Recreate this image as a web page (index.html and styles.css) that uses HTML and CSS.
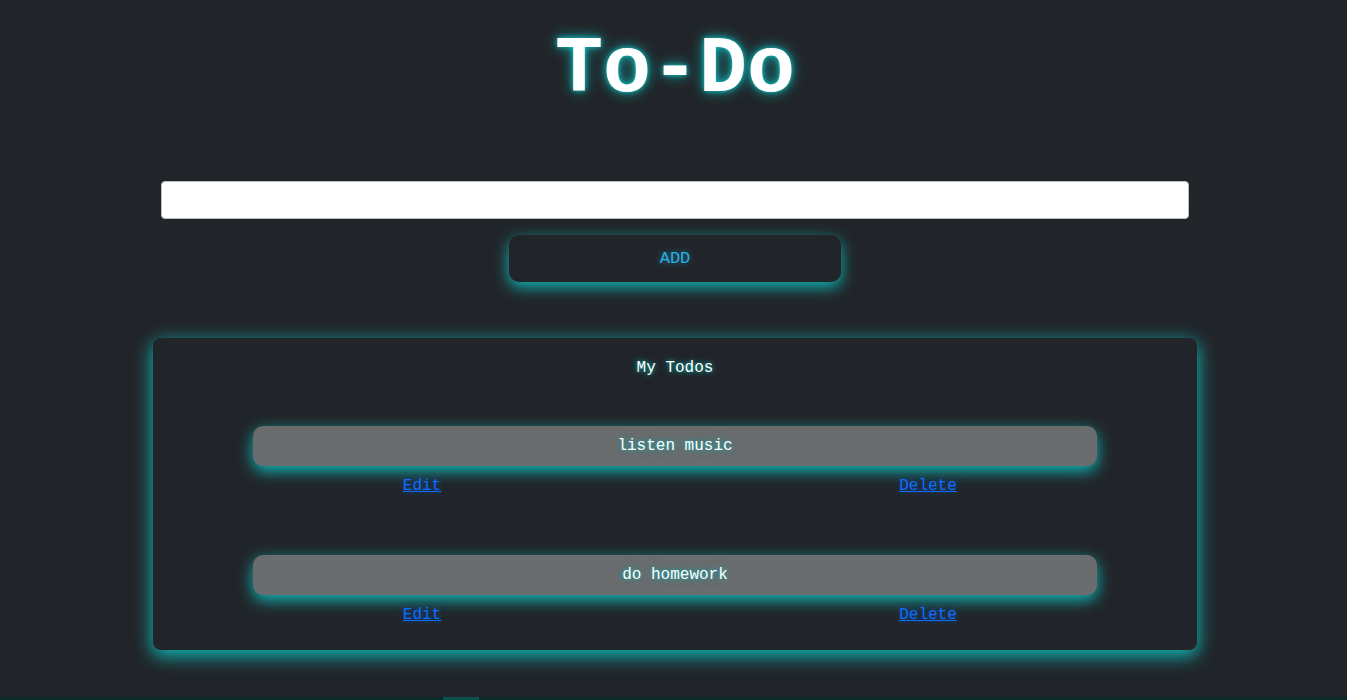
FILE: index.html
```html
<!DOCTYPE html>
<html lang="en">
<head>
<meta charset="utf-8">
<title>To-Do</title>
<link rel="stylesheet" href="styles.css">
</head>
<body>
<main class="page">
  <h1 class="title">To-Do</h1>
  <form class="add-form">
    <input class="todo-input" type="text">
    <button class="add-btn" type="button">ADD</button>
  </form>
  <section class="card">
    <h2 class="card-title">My Todos</h2>
    <div class="todo">
      <div class="todo-text">listen music</div>
      <div class="todo-actions">
        <a class="link" href="#">Edit</a>
        <a class="link" href="#">Delete</a>
      </div>
    </div>
    <div class="todo">
      <div class="todo-text">do homework</div>
      <div class="todo-actions">
        <a class="link" href="#">Edit</a>
        <a class="link" href="#">Delete</a>
      </div>
    </div>
  </section>
  <div class="bottom-strip"><span class="strip-seg"></span></div>
</main>
</body>
</html>
```
FILE: styles.css
```css
html, body {
  margin: 0;
  padding: 0;
  background: #212529;
  height: 700px;
  overflow: hidden;
}
body {
  font-family: "Courier New", Courier, "Nimbus Mono PS", "FreeMono", "Liberation Mono", monospace;
  color: #fff;
}
.page {
  padding-left: 3px;
  display: flex;
  flex-direction: column;
  align-items: center;
}
.title {
  margin: 22px 0 0;
  font-size: 80px;
  line-height: 96px;
  font-weight: 700;
  color: #fff;
  text-shadow: 0 0 5px #14c4c4, 0 0 14px #10a8a8;
}
.add-form {
  margin-top: 63px;
  display: flex;
  flex-direction: column;
  align-items: center;
}
.todo-input {
  box-sizing: border-box;
  width: 1028px;
  height: 38px;
  border: 1px solid #b9bfc6;
  border-radius: 4px;
  background: #fff;
  margin: 0;
}
.add-btn {
  box-sizing: border-box;
  margin-top: 16px;
  width: 332px;
  height: 47px;
  border: none;
  border-radius: 10px;
  background: #212529;
  color: #26b2e2;
  font-family: inherit;
  font-size: 17px;
  text-shadow: 0 0 6px rgba(38, 178, 226, 0.6);
  box-shadow: 0 5px 15px rgba(16, 182, 182, 1);
}
.card {
  box-sizing: border-box;
  margin-top: 56px;
  width: 1044px;
  height: 312px;
  border-radius: 8px;
  background: #212529;
  box-shadow: 0 5px 18px 1px rgba(16, 185, 185, 1);
  display: flex;
  flex-direction: column;
  align-items: center;
  padding-top: 20px;
}
.card-title {
  margin: 0;
  font-size: 16px;
  line-height: 20px;
  font-weight: 400;
  color: #fff;
  text-shadow: 0 0 4px #12a8a8, 0 0 8px rgba(18, 168, 168, 0.6);
}
.todo {
  display: flex;
  flex-direction: column;
  align-items: center;
  margin-top: 48px;
}
.todo + .todo {
  margin-top: 59px;
}
.todo-text {
  width: 844px;
  height: 40px;
  border-radius: 10px;
  background: #6a6c6e;
  display: flex;
  align-items: center;
  justify-content: center;
  font-size: 16px;
  color: #fff;
  text-shadow: 0 0 4px #12a8a8, 0 0 8px rgba(18, 168, 168, 0.6);
  box-shadow: 0 5px 15px rgba(16, 185, 185, 1);
}
.todo-actions {
  width: 1012px;
  display: flex;
  margin-top: 10px;
}
.link {
  flex: 1;
  text-align: center;
  color: #0d6efd;
  font-size: 16px;
  line-height: 20px;
  text-decoration: underline;
  text-shadow: 0 0 6px rgba(13, 110, 253, 0.5);
}
.bottom-strip {
  margin-top: 47px;
  align-self: stretch;
  margin-left: -3px;
  height: 3px;
  background: #0b2a2a;
  position: relative;
}
.strip-seg {
  position: absolute;
  left: 443px;
  top: 0;
  width: 36px;
  height: 3px;
  background: #0d514c;
}
```
